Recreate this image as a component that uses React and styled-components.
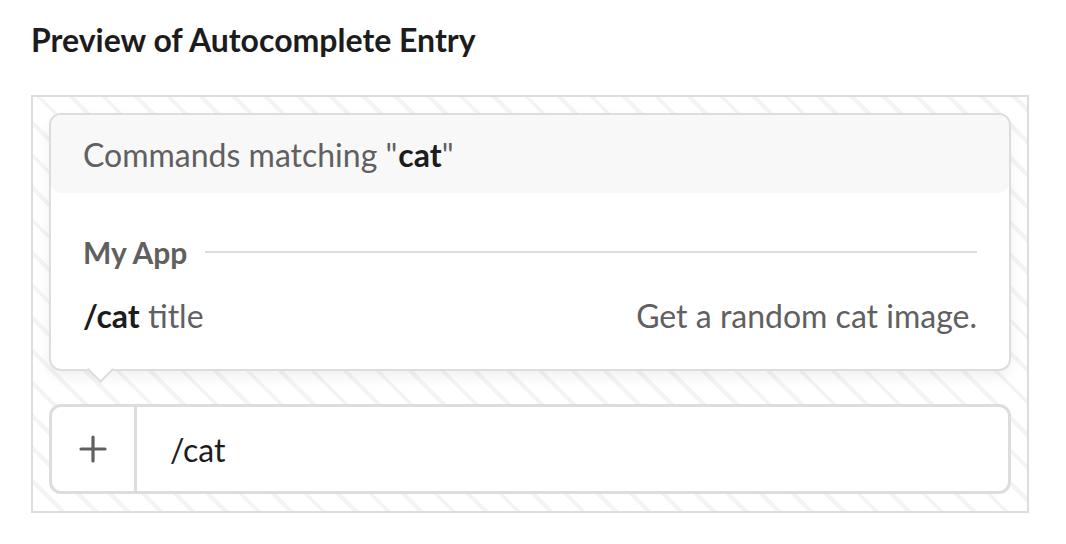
import styled, { createGlobalStyle } from 'styled-components';

const GlobalStyle = createGlobalStyle`
	body {
		margin: 0;
		background: #fff;
		font-family: Lato, "Noto Sans", sans-serif;
		color: #1d1c1d;
	}
`;

const App = () => {
	return (
		<Page>
			<GlobalStyle />
			<Title>Preview of Autocomplete Entry</Title>
			<Stage>
				<Popup>
					<PopupHeader>
						Commands matching "<strong>cat</strong>"
					</PopupHeader>
					<PopupBody>
						<Section>
							<SectionName>My App</SectionName>
							<SectionRule />
						</Section>
						<CommandRow>
							<Command>
								<b>/cat</b> title
							</Command>
							<Description>Get a random cat image.</Description>
						</CommandRow>
					</PopupBody>
					<Caret />
				</Popup>
				<InputBox>
					<PlusButton>
						<svg width="28" height="28" viewBox="0 0 28 28">
							<path d="M14 2v24M2 14h24" stroke="#616061" strokeWidth="3.2" strokeLinecap="round" />
						</svg>
					</PlusButton>
					<InputText>/cat</InputText>
				</InputBox>
			</Stage>
		</Page>
	);
};

export default App;

const Page = styled.div`
	padding: 20px 37px 0 31px;
`;

const Title = styled.h2`
	margin: 0 0 35px;
	font-size: 32px;
	font-weight: 700;
	line-height: 40px;
	color: #1d1c1d;
`;

const Stage = styled.div`
	border: 2px solid #ddd;
	padding: 16px 16px 17px;
	display: flex;
	flex-direction: column;
	gap: 33px;
	background: repeating-linear-gradient(
		45deg,
		#fff 0px,
		#fff 19px,
		#f4f4f4 19px,
		#f4f4f4 23px
	);
`;

const Popup = styled.div`
	position: relative;
	background: #fff;
	border: 2px solid #ddd;
	border-radius: 12px;
	box-shadow: 0 6px 14px rgba(0, 0, 0, 0.06);
`;

const PopupHeader = styled.div`
	height: 78px;
	display: flex;
	align-items: center;
	padding: 0 32px;
	background: #f8f8f8;
	border-radius: 10px;
	font-size: 32px;
	color: #616061;

	strong {
		color: #1d1c1d;
		font-weight: 700;
		margin-left: 1px;
	}
`;

const PopupBody = styled.div`
	padding: 39px 32px 34px;
	display: flex;
	flex-direction: column;
	gap: 23px;
`;

const Section = styled.div`
	display: flex;
	align-items: center;
	gap: 18px;
	height: 40px;
`;

const SectionName = styled.span`
	font-size: 30px;
	font-weight: 700;
	color: #616061;
`;

const SectionRule = styled.div`
	flex: 1;
	height: 2px;
	background: #ddd;
`;

const CommandRow = styled.div`
	display: flex;
	justify-content: space-between;
	align-items: center;
	height: 40px;
	font-size: 32px;
`;

const Command = styled.span`
	color: #616061;

	b {
		color: #1d1c1d;
		font-weight: 700;
	}
`;

const Description = styled.span`
	color: #616061;
`;

const Caret = styled.div`
	position: absolute;
	left: 40px;
	bottom: -10px;
	width: 19px;
	height: 19px;
	box-sizing: border-box;
	background: #fff;
	border-right: 2px solid #ddd;
	border-bottom: 2px solid #ddd;
	transform: rotate(45deg);
`;

const InputBox = styled.div`
	display: flex;
	height: 84px;
	border: 3px solid #ddd;
	border-radius: 12px;
	background: #fff;
`;

const PlusButton = styled.div`
	display: flex;
	align-items: center;
	justify-content: center;
	border-right: 3px solid #ddd;
	box-sizing: border-box;
	width: 85px;
`;

const InputText = styled.div`
	display: flex;
	align-items: center;
	padding-left: 33px;
	font-size: 32px;
	color: #1d1c1d;
`;
